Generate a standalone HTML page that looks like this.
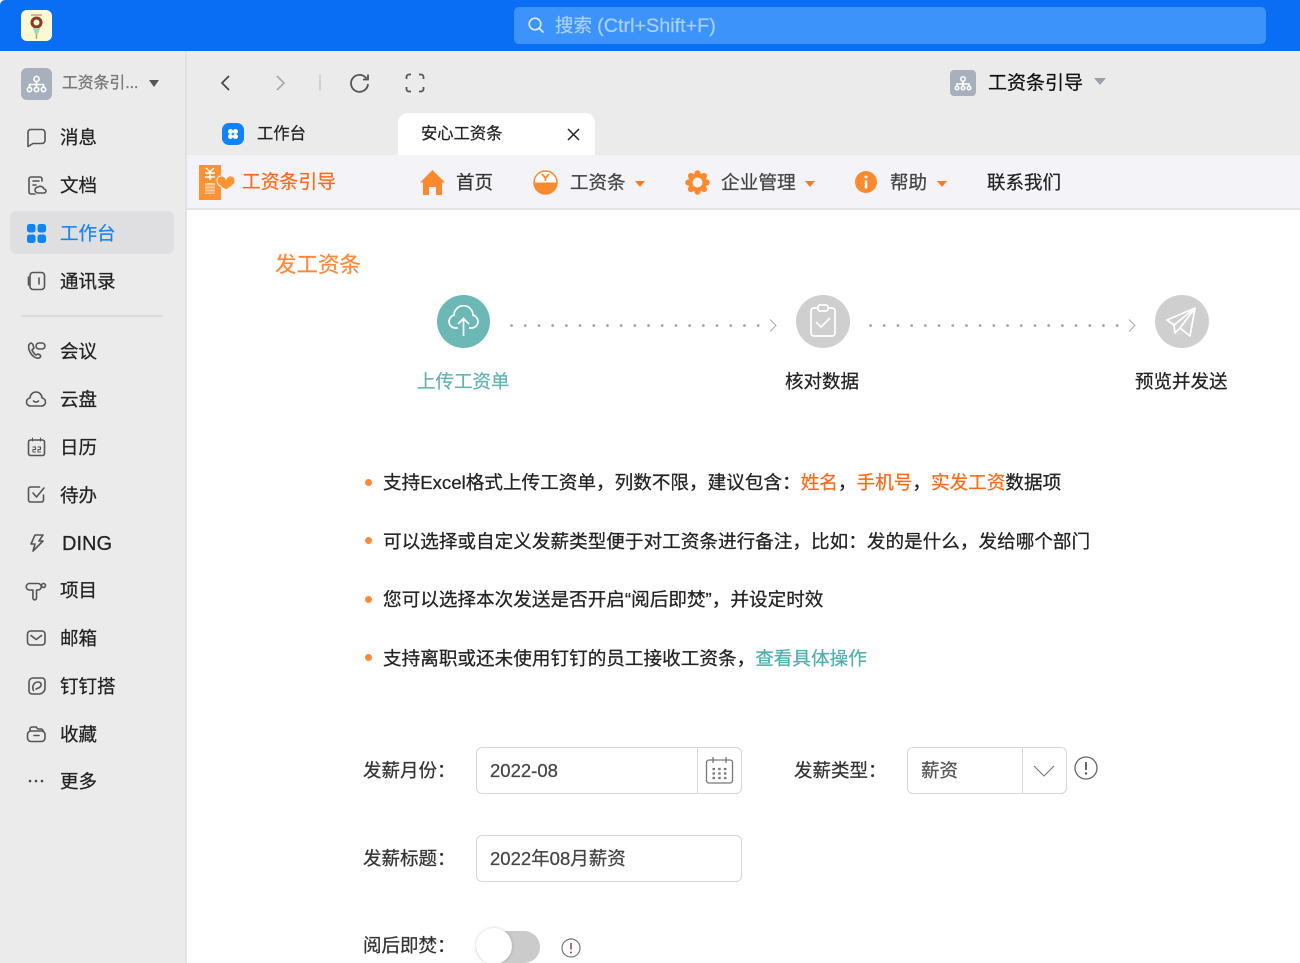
<!DOCTYPE html>
<html lang="zh"><head><meta charset="utf-8"><style>
html,body{margin:0;padding:0;width:1300px;height:963px;overflow:hidden;background:#fff}
body{position:relative;font-family:"Liberation Sans","Noto Sans CJK SC",sans-serif;color:#222;filter:blur(.3px)}
.t{position:absolute;white-space:nowrap;line-height:1;font-size:18.5px;transform:translateY(1px);-webkit-text-stroke:.25px currentColor}
.b{position:absolute}
svg{position:absolute;overflow:visible;fill:none}
.i{stroke:#555;stroke-width:1.6;stroke-linecap:round;stroke-linejoin:round}
.o{color:#ff6a1a}.g{color:#555}
</style></head><body>
<div class="b" style="left:0;top:0;width:1300px;height:51px;background:#0a6ef5;border-top-left-radius:5px"></div>
<div class="b" style="left:21px;top:10px;width:31px;height:31px;border-radius:6px;background:#fbf8d4"></div>
<svg style="left:21px;top:10px" width="31" height="31"><circle cx="15.500" cy="12.500" r="4.500" stroke="#8a3a25" stroke-width="3"/><path d="M12 18h7l-2 6h-3z" fill="#9fd8bf"/><path d="M10 5h11" stroke="#c9b98d" stroke-width="2"/><path d="M15.500 24v5" stroke="#d09a70" stroke-width="1.500"/></svg>
<div class="b" style="left:514px;top:7px;width:752px;height:37px;border-radius:5px;background:#3c94fb"></div>
<svg style="left:527px;top:16px" width="18" height="18"><circle cx="8" cy="8" r="5.800" stroke="#dcebff" stroke-width="1.600"/><path d="M12.300 12.300l3.700 3.700" stroke="#dcebff" stroke-width="1.600" stroke-linecap="round"/></svg>
<div class="t" style="left:555px;top:16px;color:#a9d0fc;font-size:18.500px">搜索 <span style="font-size:19.800px">(Ctrl+Shift+F)</span></div>

<!-- sidebar -->
<div class="b" style="left:0;top:51px;width:185px;height:912px;background:#ebebeb;border-right:2px solid #e1e1e1"></div>
<div class="b" style="left:21px;top:68px;width:31px;height:32px;border-radius:6px;background:#a8afbd"></div>
<svg style="left:21px;top:68px" width="31" height="32"><g stroke="#fff" stroke-width="1.600"><circle cx="15.500" cy="11" r="2.600"/><circle cx="8.500" cy="21.500" r="2.200"/><circle cx="15.500" cy="21.500" r="2.200"/><circle cx="22.500" cy="21.500" r="2.200"/><path d="M15.500 14v5M8.500 19v-2.500h14V19"/></g></svg>
<div class="t g" style="left:62px;top:75px;color:#777;font-size:15.800px;-webkit-text-stroke:.3px #777">工资条引...</div>
<div class="b" style="left:149px;top:80px;border:5px solid transparent;border-top:7px solid #555;border-bottom:0"></div>

<div class="b" style="left:10px;top:211px;width:164px;height:43px;border-radius:6px;background:#dfdfe1"></div>
<div class="t" style="left:60px;top:128px">消息</div>
<div class="t" style="left:60px;top:176px">文档</div>
<div class="t" style="left:60px;top:224px;color:#1585f5">工作台</div>
<div class="t" style="left:60px;top:272px">通讯录</div>
<div class="b" style="left:21px;top:315px;width:142px;height:2px;background:#dcdcdc"></div>
<div class="t" style="left:60px;top:342px">会议</div>
<div class="t" style="left:60px;top:390px">云盘</div>
<div class="t" style="left:60px;top:438px">日历</div>
<div class="t" style="left:60px;top:486px">待办</div>
<div class="t" style="left:62px;top:533px;font-size:20px">DING</div>
<div class="t" style="left:60px;top:581px">项目</div>
<div class="t" style="left:60px;top:629px">邮箱</div>
<div class="t" style="left:60px;top:677px">钉钉搭</div>
<div class="t" style="left:60px;top:725px">收藏</div>
<div class="t" style="left:60px;top:772px">更多</div>

<svg class="i" style="left:26px;top:128px" width="20" height="20"><path d="M4 1.500h12a3 3 0 0 1 3 3v8a3 3 0 0 1-3 3H7l-5 3V4.500a3 3 0 0 1 2-3z"/></svg>
<svg class="i" style="left:27px;top:175px" width="20" height="20"><path d="M15 6V4a2 2 0 0 0-2-2H4a2 2 0 0 0-2 2v13a2 2 0 0 0 2 2h4M6 6h6M6 10h3"/><path d="M11 18a3 3 0 0 1 0-6 4 4 0 0 1 6 2 2 2 0 0 1 0 4z"/></svg>
<svg style="left:27px;top:224px" width="19" height="19"><rect x="0" y="0" width="8.500" height="8.500" rx="2.500" fill="#0f83fb"/><rect x="10.500" y="0" width="8.500" height="8.500" rx="2.500" fill="#0f83fb"/><rect x="0" y="10.500" width="8.500" height="8.500" rx="2.500" fill="#0f83fb"/><rect x="10.500" y="10.500" width="8.500" height="8.500" rx="2.500" fill="#0f83fb"/></svg>
<svg class="i" style="left:27px;top:271px" width="19" height="20"><rect x="3" y="1.500" width="14.500" height="17" rx="3"/><path d="M1.500 6v8M12 7v6"/></svg>
<svg class="i" style="left:26px;top:341px" width="20" height="20"><path d="M5 2c-3 1-3 5-1 9s6 7 9 6c2-1 2-2 1-3l-2-1-2 1c-2-1-3-3-4-5l2-2-1-3c-.5-1-1-2-2-2z"/><rect x="10" y="2" width="9" height="6" rx="3"/></svg>
<svg class="i" style="left:26px;top:390px" width="20" height="18"><path d="M5 16a4 4 0 0 1-1-8 6 6 0 0 1 12 0 4 4 0 0 1-1 8zM7.500 11c1.500 1.500 3.500 1.500 5 0"/></svg>
<svg class="i" style="left:27px;top:437px" width="19" height="20"><rect x="1.500" y="3" width="16" height="15.500" rx="2"/><path d="M5.500 1v3M13.500 1v3M6 10h2.500v2.500H6V15h2.500M11 10h2.500v2.500H11V15h2.500" stroke-width="1.100"/></svg>
<svg class="i" style="left:27px;top:485px" width="19" height="19"><path d="M16.500 10v5a2 2 0 0 1-2 2h-11a2 2 0 0 1-2-2V4a2 2 0 0 1 2-2h9M6 8l3.500 4L17 3"/></svg>
<svg class="i" style="left:28px;top:533px" width="17" height="20"><path d="M7 2h8l-4 6h4L5 18l2-7H3z"/></svg>
<svg class="i" style="left:26px;top:581px" width="21" height="20"><path d="M3 2.500h9a2.800 2.800 0 0 1 0 6.500h-1.500v8a1.800 1.800 0 0 1-3.600 0V9H3a3.300 3.300 0 0 1 0-6.500z"/><circle cx="17.500" cy="4.500" r="2"/></svg>
<svg class="i" style="left:26px;top:629px" width="20" height="18"><rect x="1.500" y="2" width="17.500" height="14" rx="3"/><path d="M5 6.500l5.200 4 5.300-4"/></svg>
<svg class="i" style="left:27px;top:676px" width="19" height="20"><path d="M6 2h9a3 3 0 0 1 3 3v7a6 6 0 0 1-6 6H5a3 3 0 0 1-3-3V6a4 4 0 0 1 4-4z"/><path d="M6.500 14.500c-2-4 .5-8.500 4.500-8.500 3.500 0 4 3.500 1.500 5.500L9 13"/></svg>
<svg class="i" style="left:26px;top:724px" width="20" height="20"><path d="M4 7V5a2 2 0 0 1 2-2h4l2 2h3a2 2 0 0 1 2 2"/><rect x="1.500" y="7" width="17.500" height="10.500" rx="3.500"/><path d="M8 11.500h5"/></svg>
<svg style="left:27px;top:779px" width="18" height="4"><circle cx="3" cy="2" r="1.300" fill="#444"/><circle cx="9" cy="2" r="1.300" fill="#444"/><circle cx="15" cy="2" r="1.300" fill="#444"/></svg>

<!-- toolbar -->
<div class="b" style="left:187px;top:51px;width:1113px;height:104px;background:#ebebeb"></div>
<svg style="left:218px;top:74px" width="14" height="18"><path d="M11 2L4 9l7 7" stroke="#444" stroke-width="1.700"/></svg>
<svg style="left:274px;top:74px" width="14" height="18"><path d="M3 2l7 7-7 7" stroke="#aaa" stroke-width="1.700"/></svg>
<div class="b" style="left:319px;top:75px;width:2px;height:16px;background:#d2d2d2"></div>
<svg style="left:349px;top:72px" width="22" height="22"><path d="M17.500 6.500A8.500 8.500 0 1 0 19 12" stroke="#555" stroke-width="1.800"/><path d="M19 2.500v5h-5" stroke="#555" stroke-width="1.800"/></svg>
<svg style="left:405px;top:73px" width="20" height="20"><path d="M1.500 6V4a2.500 2.500 0 0 1 2.500-2.500h2M14 1.500h2A2.500 2.500 0 0 1 18.500 4v2M18.500 14v2a2.500 2.500 0 0 1-2.500 2.500h-2M6 18.500H4A2.500 2.500 0 0 1 1.500 16v-2" stroke="#555" stroke-width="1.800"/></svg>
<div class="b" style="left:950px;top:70px;width:26px;height:26px;border-radius:4px;background:#a8afbd"></div>
<svg style="left:950px;top:70px" width="26" height="26"><g stroke="#fff" stroke-width="1.500"><circle cx="13" cy="9" r="2.200"/><circle cx="7" cy="18" r="1.800"/><circle cx="13" cy="18" r="1.800"/><circle cx="19" cy="18" r="1.800"/><path d="M13 11.500v4M7 16v-2h12v2"/></g></svg>
<div class="t" style="left:988px;top:73px;font-size:19px;color:#111">工资条引导</div>
<div class="b" style="left:1094px;top:78px;border:6px solid transparent;border-top:7px solid #9aa0ad;border-bottom:0"></div>

<!-- tabs -->
<div class="b" style="left:222px;top:123px;width:22px;height:22px;border-radius:7px;background:#0f83fb"></div>
<svg style="left:222px;top:123px" width="22" height="22"><circle cx="8.500" cy="8.500" r="2.500" fill="#fff"/><circle cx="13.500" cy="8.500" r="2.500" fill="#fff"/><circle cx="8.500" cy="13.500" r="2.500" fill="#fff"/><circle cx="13.500" cy="13.500" r="2.500" fill="#fff"/></svg>
<div class="t" style="left:257px;top:125px;font-size:16.300px">工作台</div>
<div class="b" style="left:398px;top:113px;width:197px;height:42px;background:#fff;border-radius:10px 10px 0 0"></div>
<div class="t" style="left:421px;top:125px;font-size:16.300px">安心工资条</div>
<svg style="left:567px;top:128px" width="13" height="13"><path d="M1 1l11 11M12 1L1 12" stroke="#222" stroke-width="1.500"/></svg>

<!-- nav -->
<div class="b" style="left:187px;top:155px;width:1113px;height:53px;background:#f4f4f8;border-bottom:2px solid #e4e4e6"></div>
<svg style="left:199px;top:165px" width="36" height="35"><path d="M0 0h22v35H0z" fill="#ff9232"/><path d="M7 3l4 4 4-4M6 8h10M6 12h10M11 7v8" stroke="#fff" stroke-width="1.500"/><path d="M6 18h10v11H6z" fill="#ffd0a3"/><path d="M6 21h10M6 24h10M6 27h10" stroke="#ff9232"/><path d="M27 25c-3-2-9-5-9-8.500a4 4 0 0 1 9-2 4 4 0 0 1 9 2c0 3.500-6 6.500-9 8.500z" fill="#ff9232" stroke="#f4f4f8" stroke-width="1"/></svg>
<div class="t o" style="left:242px;top:172px;font-size:18.800px;color:#ff6a1a">工资条引导</div>
<svg style="left:420px;top:170px" width="25" height="25"><path d="M12.500 0L25 12.500h-3V25h-6v-8H9v8H3V12.500H0z" fill="#fb8a2e"/></svg>
<div class="t" style="left:456px;top:173px;font-size:18.500px;color:#333">首页</div>
<svg style="left:533px;top:170px" width="25" height="25"><circle cx="12.500" cy="12.500" r="11.500" fill="#fff" stroke="#fb8a2e" stroke-width="1.500"/><path d="M1 12.500h23a11.500 11.500 0 0 1-23 0z" fill="#fb8a2e"/><path d="M9 4l3.500 4L16 4M12.500 8v3" stroke="#fb8a2e" stroke-width="1.800"/></svg>
<div class="t" style="left:570px;top:173px;font-size:18.500px;color:#444">工资条</div>
<div class="b" style="left:635px;top:181px;border:5px solid transparent;border-top:6px solid #ff7a1e;border-bottom:0"></div>
<svg style="left:685px;top:170px" width="25" height="25"><g fill="#fb8a2e"><circle cx="12.500" cy="12.500" r="9.500"/><circle cx="12.500" cy="3.200" r="3"/><circle cx="12.500" cy="21.800" r="3"/><circle cx="3.200" cy="12.500" r="3"/><circle cx="21.800" cy="12.500" r="3"/><circle cx="5.900" cy="5.900" r="3"/><circle cx="19.100" cy="5.900" r="3"/><circle cx="5.900" cy="19.100" r="3"/><circle cx="19.100" cy="19.100" r="3"/></g><circle cx="12.500" cy="12.500" r="5" fill="#f4f4f8"/></svg>
<div class="t" style="left:721px;top:173px;font-size:18.700px;color:#444">企业管理</div>
<div class="b" style="left:805px;top:181px;border:5px solid transparent;border-top:6px solid #ff7a1e;border-bottom:0"></div>
<div class="b" style="left:855px;top:171px;width:22px;height:22px;border-radius:50%;background:#fb8a2e"></div>
<svg style="left:855px;top:171px" width="22" height="22"><circle cx="11" cy="6" r="1.500" fill="#fff"/><path d="M11 9.500v8" stroke="#fff" stroke-width="2.500"/></svg>
<div class="t" style="left:890px;top:173px;font-size:18.500px;color:#444">帮助</div>
<div class="b" style="left:937px;top:181px;border:5px solid transparent;border-top:6px solid #ff7a1e;border-bottom:0"></div>
<div class="t" style="left:987px;top:173px;font-size:18.500px;color:#222">联系我们</div>

<!-- heading -->
<div class="t" style="left:275px;top:254px;font-size:21.500px;color:#ff8a3c">发工资条</div>

<!-- steps -->
<div class="b" style="left:437px;top:295px;width:53px;height:53px;border-radius:50%;background:#6cb8b6"></div>
<svg style="left:437px;top:295px" width="53" height="53"><path d="M21 33h-3a6.500 6.500 0 0 1-1-12.800 9.500 9.500 0 0 1 19 0 6.500 6.500 0 0 1-1 12.800h-3" stroke="#fff" stroke-width="1.700"/><path d="M26.500 41V24M21 29l5.500-5.500L32 29" stroke="#fff" stroke-width="1.700"/></svg>
<div class="b" style="left:796px;top:295px;width:54px;height:53px;border-radius:50%;background:#cfcfcf"></div>
<svg style="left:796px;top:295px" width="54" height="53"><rect x="15" y="13" width="24" height="28" rx="3" stroke="#fff" stroke-width="1.700"/><rect x="22" y="10" width="10" height="6" rx="2" fill="#cfcfcf" stroke="#fff" stroke-width="1.700"/><path d="M20 27l5 5 9-9" stroke="#fff" stroke-width="1.700"/></svg>
<div class="b" style="left:1155px;top:295px;width:54px;height:53px;border-radius:50%;background:#cfcfcf"></div>
<svg style="left:1155px;top:295px" width="54" height="53"><path d="M40 13L12 25l7 5zM40 13L19 30l1 8 5-5zM40 13l-5 28-10-8" stroke="#fff" stroke-width="1.700" stroke-linejoin="round"/></svg>
<svg style="left:510px;top:318px" width="270" height="16"><path d="M1.500 7.500H250" stroke="#9a9a9a" stroke-width="2.600" stroke-linecap="round" stroke-dasharray="0.100 13.600"/><path d="M260 1.500l6 6-6 6" stroke="#aaa" stroke-width="1"/></svg>
<svg style="left:869px;top:318px" width="270" height="16"><path d="M1.500 7.500H250" stroke="#9a9a9a" stroke-width="2.600" stroke-linecap="round" stroke-dasharray="0.100 13.600"/><path d="M260 1.500l6 6-6 6" stroke="#aaa" stroke-width="1"/></svg>
<div class="t" style="left:417px;top:372px;color:#62b3b2">上传工资单</div>
<div class="t" style="left:785px;top:372px">核对数据</div>
<div class="t" style="left:1135px;top:372px">预览并发送</div>

<!-- bullets -->
<div class="b" style="left:365px;top:479px;width:7px;height:7px;border-radius:50%;background:#ff8a3c"></div>
<div class="b" style="left:365px;top:537px;width:7px;height:7px;border-radius:50%;background:#ff8a3c"></div>
<div class="b" style="left:365px;top:596px;width:7px;height:7px;border-radius:50%;background:#ff8a3c"></div>
<div class="b" style="left:365px;top:654px;width:7px;height:7px;border-radius:50%;background:#ff8a3c"></div>
<div class="t" style="left:383px;top:473px;font-size:18.630px">支持Excel格式上传工资单，列数不限，建议包含：<span class="o">姓名</span>，<span class="o">手机号</span>，<span class="o">实发工资</span>数据项</div>
<div class="t" style="left:383px;top:532px;font-size:18.630px">可以选择或自定义发薪类型便于对工资条进行备注，比如：发的是什么，发给哪个部门</div>
<div class="t" style="left:383px;top:590px;font-size:18.630px">您可以选择本次发送是否开启“阅后即焚”，并设定时效</div>
<div class="t" style="left:383px;top:649px;font-size:18.630px">支持离职或还未使用钉钉的员工接收工资条，<span style="color:#4fb0ad">查看具体操作</span></div>

<!-- form -->
<div class="t" style="left:363px;top:761px;color:#333">发薪月份：</div>
<div class="b" style="left:476px;top:747px;width:264px;height:45px;border:1.500px solid #d6d6d6;border-radius:6px"></div>
<div class="b" style="left:697px;top:748px;width:1px;height:45px;background:#d6d6d6"></div>
<div class="t" style="left:490px;top:761px;color:#444">2022-08</div>
<svg style="left:705px;top:756px" width="29" height="29"><rect x="1.500" y="4" width="26" height="23" rx="2.500" stroke="#777" stroke-width="1.300"/><path d="M8 1v6M21 1v6" stroke="#777" stroke-width="1.300"/><path d="M7.500 13h14M7.500 17.500h14M7.500 22h14" stroke="#777" stroke-width="2.200" stroke-dasharray="2.500 3.200"/></svg>
<div class="t" style="left:794px;top:761px;color:#333">发薪类型：</div>
<div class="b" style="left:907px;top:747px;width:158px;height:45px;border:1.500px solid #d6d6d6;border-radius:6px"></div>
<div class="b" style="left:1022px;top:748px;width:1px;height:45px;background:#d6d6d6"></div>
<div class="t" style="left:921px;top:761px;color:#555">薪资</div>
<svg style="left:1033px;top:765px" width="22" height="12"><path d="M1 1l10 10L21 1" stroke="#777" stroke-width="1.100"/></svg>
<svg style="left:1074px;top:756px" width="24" height="24"><circle cx="12" cy="12" r="11" stroke="#666" stroke-width="1.300"/><path d="M12 6v8" stroke="#555" stroke-width="1.800"/><circle cx="12" cy="17.500" r="1.200" fill="#555"/></svg>
<div class="t" style="left:363px;top:849px;color:#333">发薪标题：</div>
<div class="b" style="left:476px;top:835px;width:264px;height:45px;border:1.500px solid #d6d6d6;border-radius:6px"></div>
<div class="t" style="left:490px;top:849px;color:#444">2022年08月薪资</div>
<div class="t" style="left:363px;top:936px;color:#333">阅后即焚：</div>
<div class="b" style="left:476px;top:931px;width:64px;height:32px;border-radius:16px;background:#cbcbcb"></div>
<div class="b" style="left:476px;top:928px;width:36px;height:36px;border-radius:50%;background:#fff;box-shadow:0 0 3px rgba(0,0,0,.2)"></div>
<svg style="left:561px;top:938px" width="20" height="20"><circle cx="10" cy="10" r="9" stroke="#777" stroke-width="1.200"/><path d="M10 5v6.500" stroke="#8a3a60" stroke-width="1.500"/><circle cx="10" cy="14.500" r="1" fill="#8a3a60"/></svg>
</body></html>
